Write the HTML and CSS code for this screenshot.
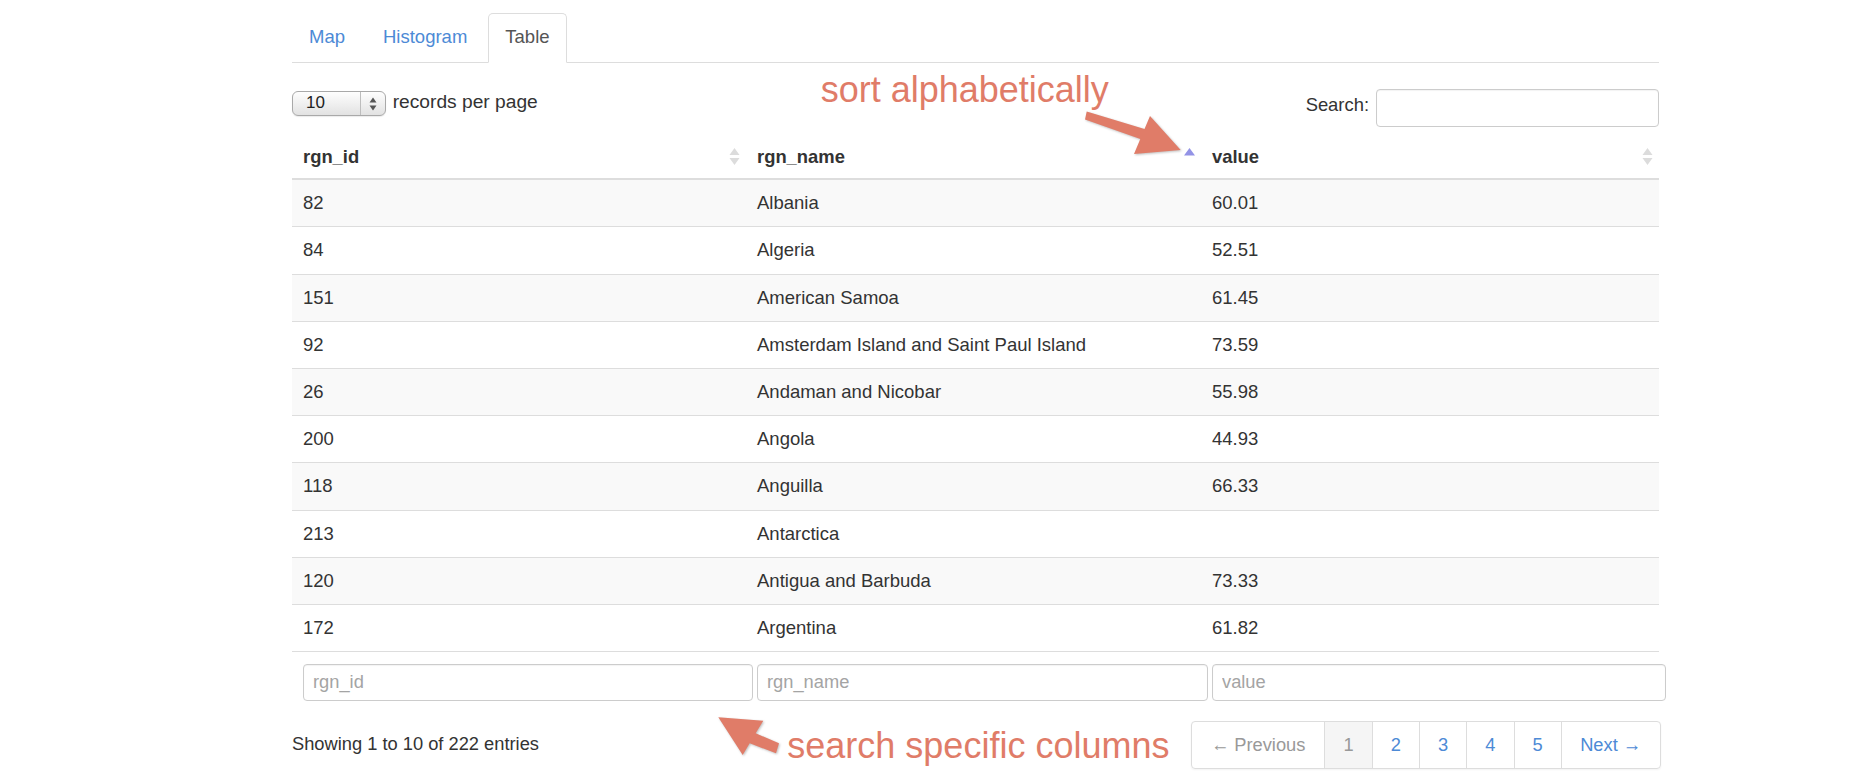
FILE: index.html
```html
<!DOCTYPE html>
<html lang="en">
<head>
<meta charset="utf-8">
<title>Table</title>
<link rel="stylesheet" href="styles.css">
</head>
<body>
<div class="screen">
  <div class="page">
    <ul class="tabs">
      <li><a>Map</a></li>
      <li><a>Histogram</a></li>
      <li class="active"><a>Table</a></li>
    </ul>

    <div class="controls">
      <div class="length">
        <div class="select">
          <span class="sel-val">10</span>
          <span class="sel-arrows">
            <svg width="8" height="14" viewBox="0 0 8 14"><polygon points="0.5,5.5 4,0.5 7.5,5.5" fill="#555"/><polygon points="0.5,8.5 4,13.5 7.5,8.5" fill="#555"/></svg>
          </span>
        </div>
        <span class="length-label">records per page</span>
      </div>
      <div class="search">
        <label class="search-label">Search:</label>
        <input class="search-input" type="text">
      </div>
    </div>

    <table class="data">
      <colgroup>
        <col class="c1"><col class="c2"><col class="c3">
      </colgroup>
      <thead>
        <tr>
          <th><div class="th-in"><span>rgn_id</span><svg class="sort" width="11" height="17" viewBox="0 0 11 17"><polygon points="0.5,7 5.5,0 10.5,7" fill="#dcdcdc"/><polygon points="0.5,10 5.5,17 10.5,10" fill="#dcdcdc"/></svg></div></th>
          <th><div class="th-in"><span>rgn_name</span><svg class="sort" width="11" height="17" viewBox="0 0 11 17"><polygon points="0,7.5 5.5,0 11,7.5" fill="#9393e6"/></svg></div></th>
          <th><div class="th-in"><span>value</span><svg class="sort" width="11" height="17" viewBox="0 0 11 17"><polygon points="0.5,7 5.5,0 10.5,7" fill="#dcdcdc"/><polygon points="0.5,10 5.5,17 10.5,10" fill="#dcdcdc"/></svg></div></th>
        </tr>
      </thead>
      <tbody>
        <tr><td>82</td><td>Albania</td><td>60.01</td></tr>
        <tr><td>84</td><td>Algeria</td><td>52.51</td></tr>
        <tr><td>151</td><td>American Samoa</td><td>61.45</td></tr>
        <tr><td>92</td><td>Amsterdam Island and Saint Paul Island</td><td>73.59</td></tr>
        <tr><td>26</td><td>Andaman and Nicobar</td><td>55.98</td></tr>
        <tr><td>200</td><td>Angola</td><td>44.93</td></tr>
        <tr><td>118</td><td>Anguilla</td><td>66.33</td></tr>
        <tr><td>213</td><td>Antarctica</td><td></td></tr>
        <tr><td>120</td><td>Antigua and Barbuda</td><td>73.33</td></tr>
        <tr><td>172</td><td>Argentina</td><td>61.82</td></tr>
      </tbody>
      <tfoot>
        <tr>
          <td><input class="filter" type="text" placeholder="rgn_id"></td>
          <td><input class="filter" type="text" placeholder="rgn_name"></td>
          <td><input class="filter" type="text" placeholder="value"></td>
        </tr>
      </tfoot>
    </table>

    <div class="footer">
      <div class="info">Showing 1 to 10 of 222 entries</div>
      <ul class="pagination">
        <li class="prev disabled"><a>← Previous</a></li>
        <li class="num active"><a>1</a></li>
        <li class="num"><a>2</a></li>
        <li class="num"><a>3</a></li>
        <li class="num"><a>4</a></li>
        <li class="num"><a>5</a></li>
        <li class="next"><a>Next →</a></li>
      </ul>
    </div>
  </div>

  <div class="note note-sort">sort alphabetically</div>
  <div class="note note-search">search specific columns</div>
  <svg class="arrows" width="1857" height="779" viewBox="0 0 1857 779">
    <polygon class="arrow" points="1086.7,111.5 1144.5,129 1150,116 1180.7,150 1134,154 1140.3,139 1085,119.5"/>
    <polygon class="arrow" points="718.3,717.3 763.3,720.7 755.7,733.3 779,743.3 776,753.3 749.7,743.3 742.7,755"/>
  </svg>
</div>
</body>
</html>
```

FILE: styles.css
```css
* { box-sizing: border-box; }

html, body {
  margin: 0;
  padding: 0;
  background: #fff;
}

body {
  font-family: "Liberation Sans", Arial, Helvetica, sans-serif;
  font-size: 18.5px;
  color: #333;
}

.screen {
  position: relative;
  width: 1857px;
  height: 779px;
  overflow: hidden;
}

.page {
  width: 1367px;
  margin-left: 292px;
  padding-top: 13px;
}

/* Tabs */
.tabs {
  list-style: none;
  margin: 0;
  padding: 0;
  display: flex;
  border-bottom: 1px solid #ddd;
}

.tabs li {
  margin-right: 4px;
  margin-bottom: -1px;
}

.tabs a {
  display: block;
  padding: 0 16px 2px;
  line-height: 46px;
  border: 1px solid transparent;
  border-radius: 5px 5px 0 0;
  color: #4d8ad6;
  font-size: 18.5px;
}

.tabs li.active a {
  color: #555;
  background: #fff;
  border-color: #ddd #ddd #fff;
}

/* Controls row */
.controls {
  display: flex;
  justify-content: space-between;
  align-items: flex-start;
  margin-top: 26.3px;
}

.length {
  display: flex;
  align-items: center;
  margin-top: 1.4px;
  gap: 6.7px;
}

.select {
  display: flex;
  width: 94px;
  height: 24.6px;
  border: 1px solid #a9a9a9;
  border-radius: 6px;
  background: linear-gradient(#fefefe, #e2e2e2);
  box-shadow: 0 1px 1px rgba(0, 0, 0, 0.08);
}

.sel-val {
  flex: 1;
  padding-left: 13px;
  font-size: 17px;
  line-height: 22.6px;
  color: #222;
  border-right: 1px solid #bdbdbd;
}

.sel-arrows {
  width: 24px;
  display: flex;
  align-items: center;
  justify-content: center;
}

.length-label {
  font-size: 19.2px;
  padding-bottom: 4px;
}

.search {
  display: flex;
  align-items: center;
  gap: 6.7px;
}

.search-label {
  font-size: 18.4px;
  padding-bottom: 5.4px;
}

.search-input {
  width: 283.3px;
  height: 37.4px;
  border: 1px solid #ccc;
  border-radius: 4px;
  box-shadow: inset 0 1px 1px rgba(0, 0, 0, 0.05);
  margin: 0;
}

/* Table */
.data {
  width: 1367px;
  margin-top: 7px;
  border-collapse: separate;
  border-spacing: 0;
  table-layout: fixed;
}

.c1 { width: 454px; }
.c2 { width: 455px; }
.c3 { width: 458px; }

.data th {
  text-align: left;
  font-weight: bold;
  font-size: 18.4px;
  padding: 12px 11px 10px;
  line-height: 22.4px;
  border-bottom: 2px solid #ddd;
}

.th-in {
  display: flex;
  justify-content: space-between;
  align-items: center;
}

.sort {
  display: block;
  margin-right: -5px;
}

.data tbody td {
  padding: 12px 11px;
  line-height: 22.2px;
  height: 47.2px;
  border-bottom: 1px solid #ddd;
  font-size: 18.5px;
}

.data tbody tr:nth-child(odd) td {
  background: #f9f9f9;
}

.data tfoot td {
  padding: 11.5px 0 0 11px;
}

.filter {
  display: block;
  width: calc(100% + 7px);
  height: 37.5px;
  margin: 0;
  border: 1px solid #ccc;
  border-radius: 4px;
  padding: 0 9px;
  font-family: "Liberation Sans", Arial, sans-serif;
  font-size: 18.3px;
  color: #555;
  box-shadow: inset 0 1px 1px rgba(0, 0, 0, 0.05);
}

.filter::placeholder {
  color: #a4a4a4;
}

/* Footer */
.footer {
  display: flex;
  justify-content: space-between;
  align-items: center;
  margin-top: 19.6px;
}

.info {
  font-size: 18.3px;
  padding-bottom: 2px;
}

.pagination {
  list-style: none;
  margin: 0 -1.5px 0 0;
  padding: 0;
  display: flex;
  border: 1px solid #ddd;
  border-radius: 4px;
  box-shadow: 0 1px 2px rgba(0, 0, 0, 0.05);
}

.pagination li a {
  display: block;
  line-height: 46.6px;
  text-align: center;
  font-size: 18.3px;
  color: #4d8ad6;
  border-left: 1px solid #ddd;
}

.pagination li.prev a {
  width: 132.3px;
  border-left: none;
}

.pagination li.num a {
  width: 47.3px;
}

.pagination li.next a {
  width: 98.7px;
}

.pagination li.disabled a {
  color: #999;
}

.pagination li.active a {
  background: #f5f5f5;
  color: #999;
}

/* Annotations */
.note {
  position: absolute;
  font-size: 36px;
  line-height: 36px;
  color: #e07c68;
  white-space: nowrap;
}

.note-sort {
  left: 820.7px;
  top: 71.8px;
}

.note-search {
  left: 787.3px;
  top: 728.4px;
}

.arrows {
  position: absolute;
  left: 0;
  top: 0;
  pointer-events: none;
}

.arrow {
  fill: #e07c68;
  filter: drop-shadow(1px 1px 1px rgba(0, 0, 0, 0.25));
}
```
